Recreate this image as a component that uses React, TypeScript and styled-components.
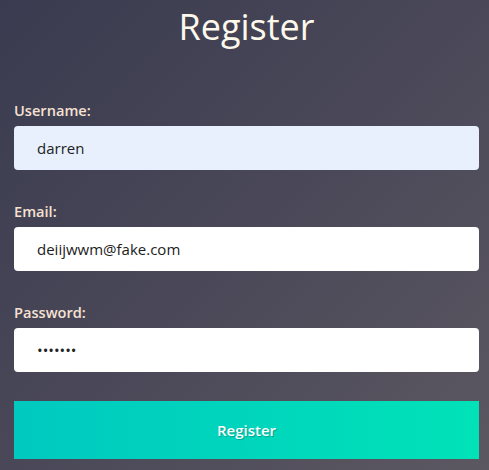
import React from "react";
import styled, { createGlobalStyle } from "styled-components";

const Global = createGlobalStyle`
  html, body { margin: 0; padding: 0; }
  body {
    width: 489px;
    height: 470px;
    overflow: hidden;
    font-family: "Open Sans", "Noto Sans", sans-serif;
    background: linear-gradient(135deg, #3a3b50 0%, #4a4858 50%, #5c5862 100%);
  }
`;

const Page = styled.div`
  width: 489px;
  height: 470px;
  box-sizing: border-box;
  padding: 3px 10px 0 14px;
  display: flex;
  flex-direction: column;
`;

const Title = styled.h1`
  margin: 0;
  font-size: 36px;
  line-height: 48px;
  font-weight: 400;
  color: #fdf8ec;
  text-align: center;
`;

const Form = styled.form`
  display: flex;
  flex-direction: column;
  margin-top: 49px;
  gap: 31px;
`;

const Field = styled.div`
  display: flex;
  flex-direction: column;
  gap: 6px;
`;

const Label = styled.label`
  font-size: 14.6px;
  line-height: 20px;
  font-weight: 600;
  color: #f6e2d2;
`;

const Input = styled.input<{ $autofill?: boolean }>`
  box-sizing: border-box;
  width: 465px;
  height: 44px;
  border: none;
  border-radius: 4px;
  padding: 0 23px;
  font-family: "Open Sans", "Noto Sans", sans-serif;
  font-size: 15px;
  color: #222;
  background: ${(p) => (p.$autofill ? "#e8f0fe" : "#ffffff")};
  outline: none;
`;

const Button = styled.button`
  margin-top: -2px;
  width: 465px;
  height: 58px;
  border: none;
  border-radius: 0;
  background: linear-gradient(90deg, #00c9c0 0%, #00e2b8 100%);
  color: #ffffff;
  font-family: "Open Sans", "Noto Sans", sans-serif;
  font-size: 15px;
  font-weight: 600;
  text-shadow: 1px 1px 1px rgba(0, 0, 0, 0.25);
  cursor: pointer;
`;

export default function App() {
  return (
    <>
      <Global />
      <Page>
        <Title>Register</Title>
        <Form onSubmit={(e) => e.preventDefault()}>
          <Field>
            <Label htmlFor="u">Username:</Label>
            <Input id="u" $autofill defaultValue="darren" />
          </Field>
          <Field>
            <Label htmlFor="e">Email:</Label>
            <Input id="e" defaultValue="deiijwwm@fake.com" />
          </Field>
          <Field>
            <Label htmlFor="p">Password:</Label>
            <Input id="p" type="password" defaultValue="abcdefg" />
          </Field>
          <Button type="submit">Register</Button>
        </Form>
      </Page>
    </>
  );
}
